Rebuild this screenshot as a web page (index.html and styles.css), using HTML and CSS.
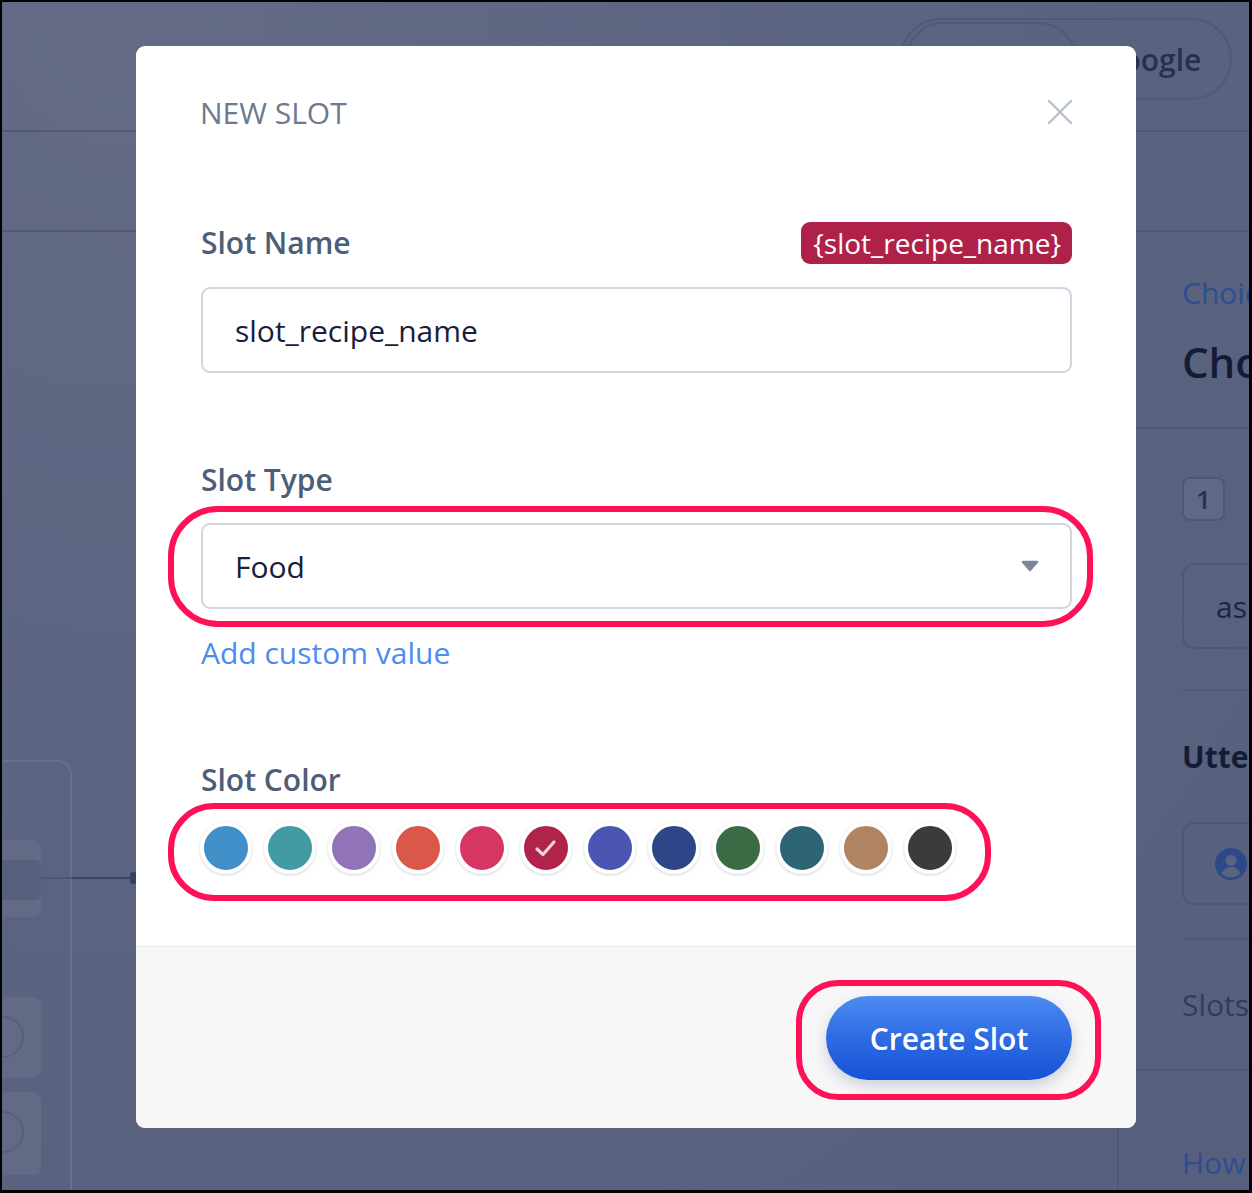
FILE: index.html
```html
<!DOCTYPE html>
<html lang="en">
<head>
<meta charset="utf-8">
<title>New Slot</title>
<link rel="stylesheet" href="styles.css">
</head>
<body>
<div class="screen">
  <div class="app">
    <div class="topbar">
      <div class="pill-group">
        <div class="pill-seg">Facebook</div>
        <div class="pill-label">Google</div>
      </div>
    </div>
    <div class="subbar"></div>
    <div class="main">
      <div class="canvas">
        <div class="lane"></div>
        <div class="node node-a"><div class="node-bar"></div></div>
        <div class="node node-b"><div class="node-dot"></div></div>
        <div class="node node-c"><div class="node-dot"></div></div>
        <div class="wire wire-in"></div>
        <div class="wire wire-out"></div>
        <div class="wire-end"></div>
      </div>
      <aside class="side">
        <div class="side-link">Choices</div>
        <div class="side-title">Choose recipe</div>
        <div class="side-rule full"></div>
        <div class="side-num">1</div>
        <div class="side-box">ask for the recipe</div>
        <div class="side-rule r2"></div>
        <div class="side-head">Utterances</div>
        <div class="side-box user">
          <svg class="user-icon" viewBox="0 0 32 32" width="32" height="32"><circle cx="16" cy="16" r="16" fill="#2e4a86"/><circle cx="16" cy="12.5" r="5.5" fill="#5a6481"/><path d="M6.5 25.5c2-4.5 5.5-6.5 9.5-6.5s7.5 2 9.5 6.5A13 13 0 0 1 6.5 25.5z" fill="#5a6481"/></svg>
        </div>
        <div class="side-rule r3"></div>
        <div class="side-text">Slots</div>
        <div class="side-rule full r4"></div>
        <div class="side-link bottom">How it works</div>
      </aside>
    </div>
  </div>

  <div class="overlay">
    <div class="modal">
      <div class="modal-body">
        <div class="modal-header">
          <h2 class="modal-title">NEW SLOT</h2>
          <svg class="close" viewBox="0 0 24 24" width="24" height="24"><path d="M1 1L23 23M23 1L1 23" stroke="#b6c1cf" stroke-width="2.4" stroke-linecap="round" fill="none"/></svg>
        </div>

        <div class="field-row first">
          <label class="label">Slot Name</label>
          <span class="tag">{slot_recipe_name}</span>
        </div>
        <div class="input">slot_recipe_name</div>

        <div class="field-row gap">
          <label class="label">Slot Type</label>
        </div>
        <div class="input select">
          <span>Food</span>
          <svg class="caret" viewBox="0 0 18 12" width="18" height="12"><path d="M2 2H16L9 10Z" fill="#7a8899" stroke="#7a8899" stroke-width="2.5" stroke-linejoin="round"/></svg>
        </div>
        <a class="link">Add custom value</a>

        <div class="field-row gap">
          <label class="label">Slot Color</label>
        </div>
        <div class="swatches">
          <span class="swatch" style="background:#418fc8"></span>
          <span class="swatch" style="background:#429ba2"></span>
          <span class="swatch" style="background:#9173b7"></span>
          <span class="swatch" style="background:#d9584a"></span>
          <span class="swatch" style="background:#d73664"></span>
          <span class="swatch selected" style="background:#b0234b">
            <svg viewBox="0 0 44 44" width="44" height="44"><path d="M13 23L19 28.5L30 16" stroke="#f2d3dc" stroke-width="3.2" fill="none" stroke-linecap="round" stroke-linejoin="round"/></svg>
          </span>
          <span class="swatch" style="background:#4a56b2"></span>
          <span class="swatch" style="background:#2e4688"></span>
          <span class="swatch" style="background:#3a6b45"></span>
          <span class="swatch" style="background:#2d6574"></span>
          <span class="swatch" style="background:#b08462"></span>
          <span class="swatch" style="background:#3b3b3b"></span>
        </div>
      </div>
      <div class="modal-footer">
        <button class="btn-primary">Create Slot</button>
      </div>

      <div class="ring ring-type"></div>
      <div class="ring ring-color"></div>
      <div class="ring ring-btn"></div>
    </div>
  </div>
</div>
</body>
</html>
```

FILE: styles.css
```css
html, body {
  margin: 0;
  padding: 0;
}
body {
  font-family: "Open Sans", "Noto Sans", "Liberation Sans", sans-serif;
  background: #000;
}
.screen {
  position: relative;
  width: 1252px;
  height: 1193px;
  box-sizing: border-box;
  border: 2px solid #000;
  border-right-width: 3px;
  border-bottom-width: 3px;
  overflow: hidden;
  background: radial-gradient(ellipse at 10% 0%, #656b86 0%, #5b6481 45%, #56607d 100%);
}
.app {
  display: flex;
  flex-direction: column;
  height: 100%;
}
.topbar {
  height: 128px;
  border-bottom: 2px solid #4f5975;
  display: flex;
  justify-content: flex-end;
  align-items: flex-start;
  padding-right: 17px;
  flex: none;
}
.pill-group {
  margin-top: 16px;
  width: 332px;
  height: 82px;
  box-sizing: border-box;
  border: 2px solid #505a76;
  border-radius: 41px;
  display: flex;
  align-items: center;
  padding: 0 4px;
}
.pill-seg {
  width: 170px;
  height: 74px;
  box-sizing: border-box;
  border: 2px solid #505a76;
  border-radius: 37px;
  color: #2a3452;
  font-size: 26px;
  font-weight: 600;
  display: flex;
  align-items: center;
  justify-content: center;
}
.pill-label {
  flex: 1;
  text-align: center;
  color: #263050;
  font-size: 30px;
  font-weight: 600;
}
.subbar {
  height: 98px;
  border-bottom: 2px solid #4f5975;
  flex: none;
}
.main {
  flex: 1;
  display: flex;
  min-height: 0;
}
.canvas {
  flex: 1;
  position: relative;
}
.lane {
  position: absolute;
  left: -10px;
  top: 528px;
  width: 80px;
  height: 500px;
  box-sizing: border-box;
  border: 2px solid #67708c;
  border-radius: 14px;
}
.node {
  position: absolute;
  left: -10px;
  width: 49px;
  background: #626a86;
  border-radius: 8px;
  overflow: hidden;
}
.node-a { top: 608px; height: 77px; }
.node-b { top: 765px; height: 81px; }
.node-c { top: 860px; height: 83px; }
.node-bar {
  margin-top: 20px;
  height: 40px;
  background: #56607d;
  border-radius: 0 6px 6px 0;
}
.node-dot {
  position: absolute;
  left: -10px;
  top: 19px;
  width: 42px;
  height: 42px;
  box-sizing: border-box;
  border: 2px solid #55607c;
  border-radius: 50%;
}
.wire {
  position: absolute;
  top: 645px;
  height: 2px;
}
.wire-in { left: 39px; width: 31px; background: #4d5877; }
.wire-out { left: 70px; width: 60px; background: #36446a; }
.wire-end {
  position: absolute;
  left: 128px;
  top: 640px;
  width: 7px;
  height: 12px;
  border-radius: 3px;
  background: #344268;
}
.side {
  width: 132px;
  flex: none;
  border-left: 2px solid #4f5975;
  padding-left: 63px;
  box-sizing: border-box;
  overflow: hidden;
  white-space: nowrap;
}
.side-link {
  margin-top: 41px;
  font-size: 30px;
  line-height: 40px;
  color: #2e4d8f;
}
.side-link.bottom { margin-top: 72px; }
.side-title {
  margin-top: 21px;
  font-size: 42px;
  line-height: 56px;
  font-weight: 600;
  color: #141c35;
}
.side-rule {
  height: 2px;
  background: #4f5975;
  margin-top: 37px;
  width: 400px;
}
.side-rule.full { margin-left: -63px; }
.side-rule.r2 { margin-top: 40px; }
.side-rule.r3 { margin-top: 33px; }
.side-rule.r4 { margin-top: 44px; }
.side-num {
  margin-top: 48px;
  width: 43px;
  height: 44px;
  box-sizing: border-box;
  border: 2px solid #4e5874;
  border-radius: 8px;
  background: #5f6884;
  color: #283250;
  font-size: 26px;
  font-weight: 600;
  display: flex;
  align-items: center;
  justify-content: center;
}
.side-box {
  margin-top: 42px;
  width: 400px;
  height: 86px;
  box-sizing: border-box;
  border: 2px solid #4e5874;
  border-radius: 12px;
  font-size: 30px;
  color: #1d2640;
  padding-left: 32px;
  display: flex;
  align-items: center;
}
.side-box.user { margin-top: 45px; height: 83px; padding-left: 31px; }
.side-head {
  margin-top: 46px;
  font-size: 30px;
  line-height: 40px;
  font-weight: 700;
  color: #141c35;
}
.side-text {
  margin-top: 45px;
  font-size: 30px;
  line-height: 40px;
  color: #323c58;
}

/* overlay + modal */
.overlay {
  position: absolute;
  inset: 0;
  padding: 44px 0 0 134px;
}
.modal {
  position: relative;
  width: 1000px;
  height: 1082px;
  background: #fff;
  border-radius: 9px;
  display: flex;
  flex-direction: column;
}
.modal-body {
  padding: 47px 64px 72px 65px;
  flex: none;
}
.modal-header {
  height: 40px;
  display: flex;
  justify-content: space-between;
  align-items: center;
}
.modal-title {
  margin: 0 0 0 -1px;
  font-size: 30px;
  line-height: 40px;
  font-weight: 500;
  color: #6c7990;
}
.close { margin-top: -2px; }
.field-row {
  display: flex;
  justify-content: space-between;
  align-items: center;
  height: 42px;
}
.field-row.first { margin-top: 89px; }
.field-row.gap { margin-top: 86px; }
.label {
  font-size: 30px;
  line-height: 40px;
  font-weight: 600;
  color: #4e5d78;
}
.tag {
  height: 42px;
  box-sizing: border-box;
  padding: 0 11px 0 12px;
  background: #b0214a;
  color: #fff;
  border-radius: 9px;
  font-size: 28px;
  line-height: 40px;
  display: inline-flex;
  align-items: center;
}
.input {
  margin-top: 23px;
  height: 86px;
  box-sizing: border-box;
  border: 2px solid #cfd6e0;
  border-radius: 9px;
  padding: 0 32px;
  font-size: 30px;
  color: #17203a;
  display: flex;
  align-items: center;
}
.select {
  margin-top: 22px;
  justify-content: space-between;
  padding-right: 31px;
}
.link {
  display: block;
  margin-top: 24px;
  font-size: 30px;
  line-height: 40px;
  color: #4c8cf2;
}
.swatches {
  margin-top: 21px;
  margin-left: -1px;
  display: flex;
  gap: 12px;
}
.swatch {
  width: 44px;
  height: 44px;
  border: 4px solid #fff;
  border-radius: 50%;
  box-shadow: 0 1px 3px rgba(40, 50, 80, 0.22);
  display: block;
  flex: none;
}
.swatch svg { display: block; }
.modal-footer {
  flex: 1;
  background: #f7f7f8;
  border-top: 1px solid #e5e8ee;
  border-radius: 0 0 9px 9px;
  display: flex;
  justify-content: flex-end;
  align-items: flex-start;
  padding: 49px 64px 0 0;
}
.btn-primary {
  width: 246px;
  height: 84px;
  border: none;
  border-radius: 42px;
  background: linear-gradient(180deg, #4d8bf1 0%, #2e6be3 50%, #1552d8 100%);
  color: #fff;
  font-family: inherit;
  font-size: 30px;
  font-weight: 600;
  box-shadow: 0 6px 14px rgba(60, 70, 100, 0.22);
}
.ring {
  position: absolute;
  box-sizing: border-box;
  border: 6px solid #ff1158;
  pointer-events: none;
}
.ring-type { left: 32px; top: 460px; width: 925px; height: 121px; border-radius: 50px; }
.ring-color { left: 32px; top: 757px; width: 823px; height: 98px; border-radius: 46px; }
.ring-btn { left: 660px; top: 934px; width: 305px; height: 120px; border-radius: 42px; }
```
